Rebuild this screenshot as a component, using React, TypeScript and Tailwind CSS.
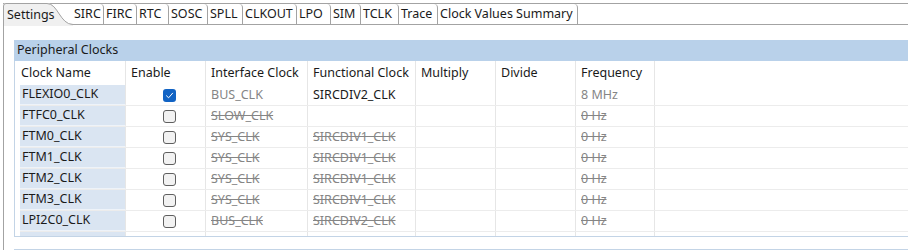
import type { ReactNode } from "react";

type Row = {
  name: string;
  enabled: boolean;
  iface: string;
  func: string;
  freq: string;
  live: boolean;
};

const tabs = [
  { label: "SIRC", w: "w-[32px]" },
  { label: "FIRC", w: "w-[33px]" },
  { label: "RTC", w: "w-[32px]" },
  { label: "SOSC", w: "w-[39px]" },
  { label: "SPLL", w: "w-[35px]" },
  { label: "CLKOUT", w: "w-[54px]" },
  { label: "LPO", w: "w-[34px]" },
  { label: "SIM", w: "w-[30px]" },
  { label: "TCLK", w: "w-[38px]" },
  { label: "Trace", w: "w-[39px]" },
  { label: "Clock Values Summary", w: "w-[140px]" },
];

const rows: Row[] = [
  { name: "FLEXIO0_CLK", enabled: true, iface: "BUS_CLK", func: "SIRCDIV2_CLK", freq: "8 MHz", live: true },
  { name: "FTFC0_CLK", enabled: false, iface: "SLOW_CLK", func: "", freq: "0 Hz", live: false },
  { name: "FTM0_CLK", enabled: false, iface: "SYS_CLK", func: "SIRCDIV1_CLK", freq: "0 Hz", live: false },
  { name: "FTM1_CLK", enabled: false, iface: "SYS_CLK", func: "SIRCDIV1_CLK", freq: "0 Hz", live: false },
  { name: "FTM2_CLK", enabled: false, iface: "SYS_CLK", func: "SIRCDIV1_CLK", freq: "0 Hz", live: false },
  { name: "FTM3_CLK", enabled: false, iface: "SYS_CLK", func: "SIRCDIV1_CLK", freq: "0 Hz", live: false },
  { name: "LPI2C0_CLK", enabled: false, iface: "BUS_CLK", func: "SIRCDIV2_CLK", freq: "0 Hz", live: false },
];

// column widths, first one sits on the blue name strip
const cols = ["w-[106px]", "w-[80px]", "w-[102px]", "w-[108px]", "w-[80px]", "w-[80px]", "w-[79px]"];

function Checkbox({ checked }: { checked: boolean }) {
  if (checked) {
    return (
      <span className="flex h-[13px] w-[13px] items-center justify-center rounded-[3px] bg-[#1163c4]">
        <svg width="9" height="9" viewBox="0 0 9 9" fill="none">
          <path d="M1.5 4.8 L3.6 6.8 L7.6 2.2" stroke="white" strokeWidth="1" strokeLinecap="round" strokeLinejoin="round" />
        </svg>
      </span>
    );
  }
  return <span className="block h-[13px] w-[13px] rounded-[3px] border border-[#5f5f5f] bg-[#f2f2f2]" />;
}

function Cell({
  w,
  pad = "pl-[5px]",
  children,
  className = "",
}: {
  w: string;
  pad?: string;
  children?: ReactNode;
  className?: string;
}) {
  return (
    <div className={`flex h-full shrink-0 items-center border-r border-[#e6e6e6] ${pad} ${w} ${className}`}>
      {children}
    </div>
  );
}

function SettingsTab() {
  return (
    <div className="relative w-[69px] shrink-0 pl-[4px] leading-[21px] text-[#1a1a1a]">
      <svg className="absolute left-0 top-[-1px]" width="70" height="23" viewBox="0 0 70 23">
        <path d="M0 23 L0 3 Q0 0 3 0 L44 0 C55 0 57 21.5 70 21.5 L70 23 Z" fill="#f0f0f0" />
        <path d="M0.5 23 L0.5 3 Q0.5 0.5 3 0.5 L44 0.5 C55 0.5 57 21.5 70 21.5" fill="none" stroke="#a3a3a3" />
      </svg>
      <span className="relative">Settings</span>
    </div>
  );
}

export default function App() {
  return (
    <div className="h-[250px] w-[908px] overflow-hidden bg-white font-['Noto_Sans',sans-serif] text-[12.5px] text-[#1a1a1a]">
      <div className="pt-[3px] pl-[3px]">
        <div className="flex h-[22px] border-y border-[#a3a3a3]">
          <SettingsTab />
          {tabs.map((t) => (
            <div
              key={t.label}
              className={`shrink-0 rounded-tr-[4px] border-r border-[#a3a3a3] pl-[2px] leading-[20px] ${t.w}`}
            >
              {t.label}
            </div>
          ))}
        </div>
      </div>

      <div className="ml-[3px] h-[226px] border-l border-[#a3a3a3] pl-[10px] pt-[15px]">
        <div className="flex h-[21px] items-center bg-[#b9d1ea] pl-[3px]">Peripheral Clocks</div>

        <div className="h-[176px] overflow-hidden border-b border-l border-[#c3d4e6] pl-[5px]">
          <div className="flex h-[24px]">
            <Cell w={cols[0]} pad="pl-[1px]">Clock Name</Cell>
            <Cell w={cols[1]}>Enable</Cell>
            <Cell w={cols[2]}>Interface Clock</Cell>
            <Cell w={cols[3]}>Functional Clock</Cell>
            <Cell w={cols[4]}>Multiply</Cell>
            <Cell w={cols[5]}>Divide</Cell>
            <Cell w={cols[6]}>Frequency</Cell>
          </div>

          {rows.map((r) => {
            const off = r.live ? "text-[#858585]" : "text-[#858585] line-through";
            return (
              <div key={r.name} className="flex h-[21px] border-b border-[#ececec]">
                <Cell w={cols[0]} pad="pl-[2px]" className="border-b border-b-[#eef3f9] bg-[#dae5f2]">
                  {r.name}
                </Cell>
                <Cell w={cols[1]} pad="pl-[37px]">
                  <Checkbox checked={r.enabled} />
                </Cell>
                <Cell w={cols[2]} className={off}>{r.iface}</Cell>
                <Cell w={cols[3]} className={r.live ? "" : off}>{r.func}</Cell>
                <Cell w={cols[4]} />
                <Cell w={cols[5]} />
                <Cell w={cols[6]} className={off}>{r.freq}</Cell>
              </div>
            );
          })}

          <div className="flex h-[21px]">
            <Cell w={cols[0]} className="bg-[#dae5f2]" />
            <Cell w={cols[1]} />
            <Cell w={cols[2]} />
            <Cell w={cols[3]} />
            <Cell w={cols[4]} />
            <Cell w={cols[5]} />
            <Cell w={cols[6]} />
          </div>
        </div>

        <div className="mt-[12px] border-t border-[#c3d4e6]" />
      </div>
    </div>
  );
}
